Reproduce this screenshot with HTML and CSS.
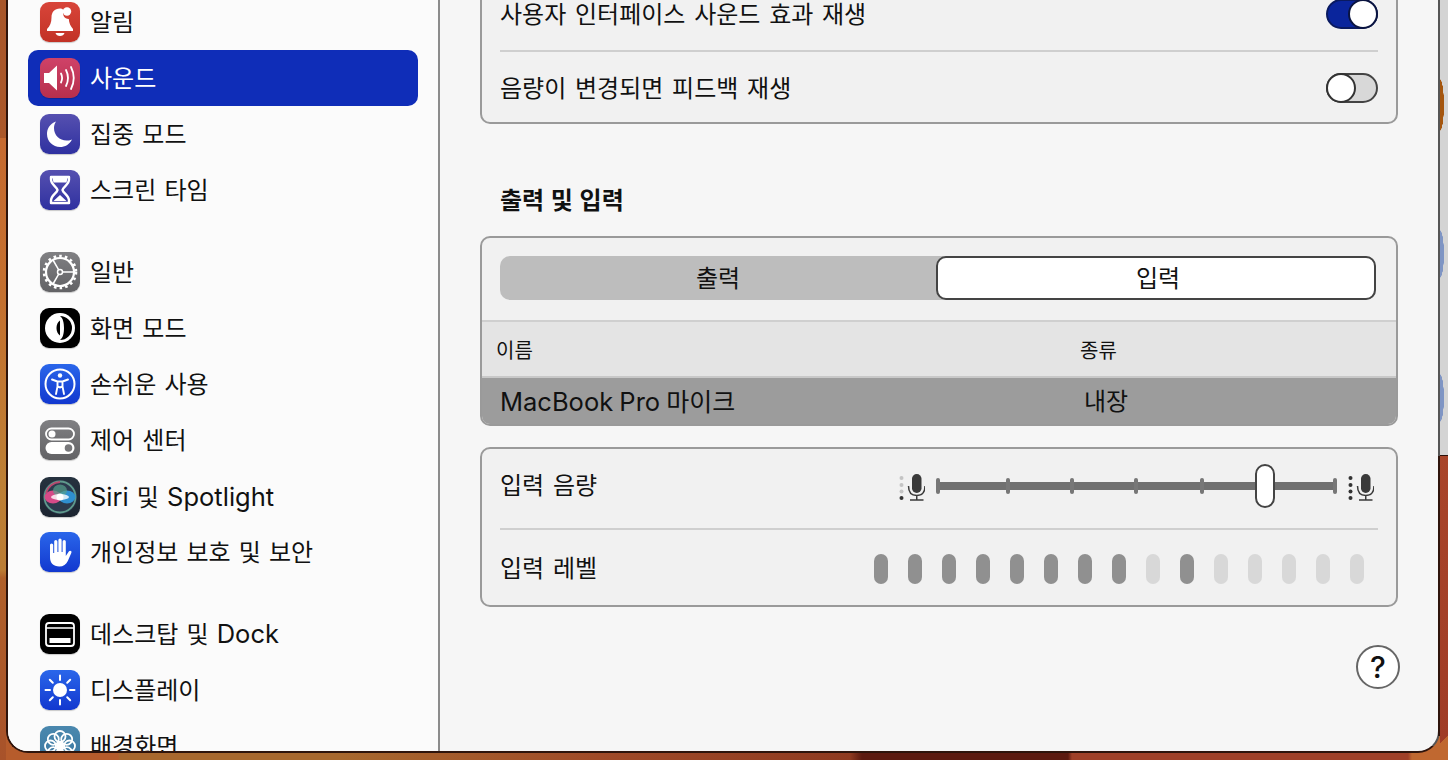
FILE: index.html
```html
<!DOCTYPE html>
<html lang="ko">
<head>
    <meta charset="UTF-8">
    <meta name="viewport" content="width=device-width, initial-scale=1.0">
    <title>사운드</title>
    <link rel="stylesheet" href="styles.css">
</head>
<body>

<div class="desktop">
    <div class="back-window"></div>

    <div class="window">
        <nav class="sidebar">
            <div class="side-group">
                <div class="side-item">
                    <span class="icon icon-red">
                        <svg viewBox="0 0 40 40"><path d="M20 6.500c-5.500 0-8.500 3.800-8.500 9 0 5-1.500 8.500-4.500 11.500v2h26v-2c-2.500-3-4-6-4.200-10-4.500 0-6.800-4-4.800-8.800-1.200-1.100-2.500-1.700-4-1.700z" fill="#fff"/><circle cx="27" cy="9.500" r="4.200" fill="#fff"/><path d="M15.500 31h9c-.5 2-2.300 3-4.500 3s-4-1-4.500-3z" fill="#fff"/></svg>
                    </span>
                    <span class="label">알림</span>
                </div>
                <div class="side-item selected">
                    <span class="icon icon-pink">
                        <svg viewBox="0 0 40 40"><path d="M4 15h5l8-7.500v25L9 25H4z" fill="#fff"/><path d="M21 15.500c1.500 3 1.500 6 0 9M26 12c2.500 5 2.500 11 0 16M31 9c3.500 7 3.500 15 0 22" fill="none" stroke="#fff" stroke-width="1.800" stroke-linecap="round"/></svg>
                    </span>
                    <span class="label">사운드</span>
                </div>
                <div class="side-item">
                    <span class="icon icon-indigo">
                        <svg viewBox="0 0 40 40"><path d="M16 7.500C9.500 10 7 15 7 20c0 7.500 6 13 13 13 5 0 9.500-2.500 12-7.500-2 1-4 1-5.500 1-7 0-12.500-5-12.500-12.500 0-2.500.8-4.800 2-6.500z" fill="#fff"/></svg>
                    </span>
                    <span class="label">집중 모드</span>
                </div>
                <div class="side-item">
                    <span class="icon icon-indigo">
                        <svg viewBox="0 0 40 40"><path d="M11 7h18v2.500c0 5-6 7.500-6.500 10.500.5 3 6.500 5.500 6.500 10.500V33H11v-2.500c0-5 6-7.500 6.500-10.500-.5-3-6.500-5.500-6.500-10.500z" fill="none" stroke="#fff" stroke-width="2.400" stroke-linejoin="round"/><path d="M12.500 8h15l-1 4.500h-13zM13.500 31l6.500-6 6.500 6z" fill="#fff"/></svg>
                    </span>
                    <span class="label">스크린 타임</span>
                </div>
            </div>

            <div class="side-group">
                <div class="side-item">
                    <span class="icon icon-gray">
                        <svg viewBox="0 0 40 40"><circle cx="20" cy="20" r="14" fill="none" stroke="#fff" stroke-width="2.200"/><circle cx="20" cy="20" r="16" fill="none" stroke="#fff" stroke-width="2.600" stroke-dasharray="2.600 3.100"/><circle cx="20" cy="20" r="2.500" fill="none" stroke="#fff" stroke-width="1.500"/><path d="M22.500 20H34M18.700 17.800 13 8M18.700 22.200 13 32" stroke="#fff" stroke-width="1.500"/></svg>
                    </span>
                    <span class="label">일반</span>
                </div>
                <div class="side-item">
                    <span class="icon icon-black">
                        <svg viewBox="0 0 40 40"><circle cx="20" cy="20" r="15" fill="#fff"/><path d="M20 8a12 12 0 0 1 0 24c3-2 4-7 4-12s-1-10-4-12z" fill="#000"/><path d="M20 12.500c-2.500 1.500-3.500 4.500-3.500 7.500s1 6 3.500 7.500z" fill="#000"/></svg>
                    </span>
                    <span class="label">화면 모드</span>
                </div>
                <div class="side-item">
                    <span class="icon icon-blue">
                        <svg viewBox="0 0 40 40"><circle cx="20" cy="20" r="14.500" fill="none" stroke="#fff" stroke-width="2"/><circle cx="20" cy="11.500" r="2.200" fill="#fff"/><path d="M12 15.500 17.500 17.500v5L16 30M28 15.500 22.500 17.500v5L24 30M17.500 17.500h5M17.500 22.500 20 23.500l2.500-1" fill="none" stroke="#fff" stroke-width="1.900" stroke-linecap="round"/></svg>
                    </span>
                    <span class="label">손쉬운 사용</span>
                </div>
                <div class="side-item">
                    <span class="icon icon-gray">
                        <svg viewBox="0 0 40 40"><rect x="6" y="8.500" width="28" height="11" rx="5.500" fill="none" stroke="#fff" stroke-width="1.800"/><circle cx="12" cy="14" r="3.500" fill="#fff"/><rect x="5.500" y="22" width="29" height="12" rx="6" fill="#fff"/><circle cx="28.500" cy="28" r="3.800" fill="#77777a"/></svg>
                    </span>
                    <span class="label">제어 센터</span>
                </div>
                <div class="side-item siri">
                    <span class="icon icon-siri">
                        <svg viewBox="0 0 40 40"><circle cx="20" cy="20" r="17" fill="#2c3a4e"/><circle cx="20" cy="20" r="15.500" fill="none" stroke="#5f9a8c" stroke-width="1.800"/><path d="M6 16a15 15 0 0 1 14-11" fill="none" stroke="#b8486e" stroke-width="1.800"/><ellipse cx="13" cy="20" rx="8.500" ry="6.500" fill="#d64a88"/><ellipse cx="27" cy="20" rx="8.500" ry="6.500" fill="#2f8fd0"/><ellipse cx="20" cy="13.500" rx="7" ry="6" fill="#56a08c" opacity=".7"/><ellipse cx="20" cy="20" rx="9" ry="3" fill="#fff" opacity=".8"/><circle cx="20" cy="20" r="3.500" fill="#fff"/></svg>
                    </span>
                    <span class="label"><span class="latin">Siri</span> 및 <span class="latin">Spotlight</span></span>
                </div>
                <div class="side-item">
                    <span class="icon icon-blue">
                        <svg viewBox="0 0 40 40"><path d="M10 13a1.600 1.600 0 0 1 3.200 0v8h1V9.500a1.600 1.600 0 0 1 3.200 0V20h1V8a1.600 1.600 0 0 1 3.200 0v12h1V9.500a1.600 1.600 0 0 1 3.200 0V24l3-4.500c1-1.500 3.500-.5 2.500 1.500l-3.500 8c-1.500 3.500-4.500 5.500-8.500 5.500-6 0-9.300-3.500-9.300-9.500z" fill="#fff"/></svg>
                    </span>
                    <span class="label">개인정보 보호 및 보안</span>
                </div>
            </div>

            <div class="side-group last">
                <div class="side-item">
                    <span class="icon icon-black">
                        <svg viewBox="0 0 40 40"><rect x="6" y="9" width="28" height="23" rx="3" fill="none" stroke="#fff" stroke-width="1.800"/><path d="M6 14h28" stroke="#fff" stroke-width="1.500"/><rect x="9.500" y="24" width="21" height="5" fill="#fff"/></svg>
                    </span>
                    <span class="label">데스크탑 및 <span class="latin">Dock</span></span>
                </div>
                <div class="side-item">
                    <span class="icon icon-blue">
                        <svg viewBox="0 0 40 40"><circle cx="20" cy="20" r="7" fill="#fff"/><path d="M20 5.500v4.500M20 30v4.500M5.500 20H10M30 20h4.500M9.800 9.800l3 3M27.200 27.200l3 3M30.200 9.800l-3 3M12.800 27.200l-3 3" stroke="#fff" stroke-width="2" stroke-linecap="round"/></svg>
                    </span>
                    <span class="label">디스플레이</span>
                </div>
                <div class="side-item">
                    <span class="icon icon-teal">
                        <svg viewBox="0 0 40 40" fill="none" stroke="#fff" stroke-width="1.800"><circle cx="20" cy="20" r="3" fill="#fff"/><circle cx="20" cy="10.500" r="5.500"/><circle cx="20" cy="29.500" r="5.500"/><circle cx="10.500" cy="20" r="5.500"/><circle cx="29.500" cy="20" r="5.500"/><circle cx="13.300" cy="13.300" r="5.500"/><circle cx="26.700" cy="13.300" r="5.500"/><circle cx="13.300" cy="26.700" r="5.500"/><circle cx="26.700" cy="26.700" r="5.500"/></svg>
                    </span>
                    <span class="label">배경화면</span>
                </div>
            </div>
        </nav>

        <main class="content">
            <section class="card">
                <div class="setting first">
                    <span class="label">사용자 인터페이스 사운드 효과 재생</span>
                    <span class="toggle on"></span>
                </div>
                <div class="setting second">
                    <span class="label">음량이 변경되면 피드백 재생</span>
                    <span class="toggle"></span>
                </div>
            </section>

            <h2 class="section-title">출력 및 입력</h2>

            <section class="card">
                <div class="segments">
                    <div class="segment">출력</div>
                    <div class="segment active">입력</div>
                </div>
                <div class="table-head">
                    <span>이름</span>
                    <span>종류</span>
                </div>
                <div class="table-row">
                    <span class="label"><span class="latin">MacBook Pro</span> 마이크</span>
                    <span class="label kind">내장</span>
                </div>
            </section>

            <section class="card input-card">
                <div class="setting volume">
                    <span class="label">입력 음량</span>
                    <div class="slider-wrap">
                        <svg class="mic" viewBox="0 0 26 28">
                            <circle cx="2.500" cy="5" r="2" fill="#c4c4c4"/>
                            <circle cx="2.500" cy="12" r="2" fill="#c4c4c4"/>
                            <circle cx="2.500" cy="18.500" r="2" fill="#c4c4c4"/>
                            <circle cx="2.500" cy="25" r="2" fill="#333"/>
                            <rect x="13" y="1" width="9.500" height="19" rx="4.700" fill="#3a3a3a"/>
                            <path d="M9.500 13c0 6 3 9.500 8.250 9.500S26 19 26 13M17.750 22.500V27M11 27h13.500" fill="none" stroke="#3a3a3a" stroke-width="1.500"/>
                        </svg>
                        <div class="slider">
                            <span class="tick" style="left: 0px"></span>
                            <span class="tick" style="left: 70px"></span>
                            <span class="tick" style="left: 134px"></span>
                            <span class="tick" style="left: 198px"></span>
                            <span class="tick" style="left: 264px"></span>
                            <span class="tick" style="left: 397px"></span>
                            <span class="thumb"></span>
                        </div>
                        <svg class="mic" viewBox="0 0 26 28">
                            <circle cx="2.500" cy="5" r="2" fill="#333"/>
                            <circle cx="2.500" cy="12" r="2" fill="#333"/>
                            <circle cx="2.500" cy="18.500" r="2" fill="#333"/>
                            <circle cx="2.500" cy="25" r="2" fill="#333"/>
                            <rect x="13" y="1" width="9.500" height="19" rx="4.700" fill="#3a3a3a"/>
                            <path d="M9.500 13c0 6 3 9.500 8.250 9.500S26 19 26 13M17.750 22.500V27M11 27h13.500" fill="none" stroke="#3a3a3a" stroke-width="1.500"/>
                        </svg>
                    </div>
                </div>
                <div class="setting level">
                    <span class="label">입력 레벨</span>
                    <div class="meter">
                        <span class="pill on"></span>
                        <span class="pill on"></span>
                        <span class="pill on"></span>
                        <span class="pill on"></span>
                        <span class="pill on"></span>
                        <span class="pill on"></span>
                        <span class="pill on"></span>
                        <span class="pill on"></span>
                        <span class="pill"></span>
                        <span class="pill on"></span>
                        <span class="pill"></span>
                        <span class="pill"></span>
                        <span class="pill"></span>
                        <span class="pill"></span>
                        <span class="pill"></span>
                    </div>
                </div>
            </section>

            <div class="help-row">
                <button class="help">?</button>
            </div>
        </main>
    </div>
</div>

</body>
</html>
```

FILE: styles.css
```css
*, *::after {
    box-sizing: border-box;
}
body {
    margin: 0;
    font-family: Inter, "Noto Sans CJK KR", sans-serif;
    color: #111;
    overflow: hidden;
}
.desktop {
    position: relative;
    width: 1448px;
    height: 760px;
    overflow: hidden;
    background:
        linear-gradient(180deg, #a8562a 0, #ab582a 138px, #c66a30 138px, #c4702f 300px, #bd7f35 480px, #bb7c34 570px, #b0602a 578px, #a8522a 760px) left top / 6px 760px no-repeat,
        linear-gradient(135deg, #a9452a 0, #a03c26 92%, #c06830 92%) right bottom / 8px 304px no-repeat,
        linear-gradient(90deg, #b65c2c 0, #b65c2c 118px, #a8682e 120px, #a8682e 340px, #a04a28 600px, #8f3a20 850px, #5c1a10 862px, #5c1a10 1068px, #a04028 1072px, #a04028 1408px, #c06830 1412px);
}
.desktop::after {
    /* window edge is darker once it leaves the window behind */
    content: "";
    position: absolute;
    left: 1438px;
    top: 456px;
    width: 2px;
    height: 280px;
    background-color: #2e140c;
}
.back-window {
    position: absolute;
    left: 1438px;
    top: 0;
    width: 10px;
    height: 456px;
    background:
        radial-gradient(ellipse 4px 26px at 2px 105px, #a5560f 0, #a5560f 95%, transparent 100%),
        radial-gradient(ellipse 4px 24px at 2px 254px, #7f95c4 0, #7f95c4 95%, transparent 100%),
        radial-gradient(ellipse 4px 24px at 2px 398px, #7f95c4 0, #7f95c4 95%, transparent 100%),
        #d4d4d4;
    border-bottom: 1px solid #2c120a;
}
.window {
    position: absolute;
    left: 6px;
    top: -28px;
    width: 1434px;
    height: 781px;
    display: flex;
    overflow: hidden;
    border: 2px solid #2e140c;
    border-right-color: #555;
    border-radius: 0 0 22px 22px;
    background: #f6f6f6;
}

/* sidebar */
.sidebar {
    width: 432px;
    flex-shrink: 0;
    padding: 20px 20px 0;
    background: #fbfbfb;
    border-right: 2px solid #8c8c8c;
    overflow: hidden;
}
.side-group {
    margin-bottom: 26px;
}
.side-item {
    display: flex;
    align-items: center;
    gap: 10px;
    height: 56px;
    padding-left: 12px;
    border-radius: 10px;
    font-size: 24px;
    word-spacing: 1.4px;
    white-space: nowrap;
}
.side-item.siri {
    padding-top: 2px;
}
.side-item.selected {
    background-color: #0f2db8;
    color: white;
}
.label {
    padding-bottom: 3px;
}
.latin {
    font-size: 25.5px;
}
.icon {
    width: 40px;
    height: 40px;
    flex-shrink: 0;
    border-radius: 9px;
    box-shadow: 0 1px 1px rgba(0,0,0,0.2);
}
.icon svg {
    display: block;
    width: 40px;
    height: 40px;
}
.icon-red { background: linear-gradient(#d8453a, #c23225); }
.icon-pink { background: linear-gradient(#cf4268, #b72f4c); }
.icon-indigo { background: linear-gradient(#5650b0, #2f31a0); }
.icon-gray { background: linear-gradient(#808083, #626265); }
.icon-black { background: #000; }
.icon-blue { background: linear-gradient(#2a66ea, #1238cf); }
.icon-siri { background: linear-gradient(#26323f, #1c2430); }
.icon-teal { background: linear-gradient(#4a88ae, #3a76a0); }

/* main pane */
.content {
    flex: 1;
    padding: 2px 40px 0;
    overflow: hidden;
}
.card {
    background-color: #f1f1f1;
    border: 2px solid #9a9a9a;
    border-radius: 10px;
    overflow: hidden;
}
.setting {
    display: flex;
    align-items: center;
    justify-content: space-between;
    margin: 0 18px;
    font-size: 24px;
    word-spacing: 2px;
}
.setting.first {
    height: 74px;
    border-bottom: 2px solid #cfcfcf;
}
.setting.second {
    height: 70px;
    padding-top: 2px;
}
.toggle {
    position: relative;
    width: 52px;
    height: 30px;
    border: 2px solid #444;
    border-radius: 15px;
    background-color: #d8d8d8;
}
.toggle::after {
    content: "";
    position: absolute;
    left: -2px;
    top: -2px;
    width: 30px;
    height: 30px;
    border: 2px solid #333;
    border-radius: 50%;
    background-color: white;
}
.toggle.on {
    background-color: #0a259c;
    border-color: #0a1a60;
}
.toggle.on::after {
    left: 20px;
    border-color: #0a1440;
}
.section-title {
    margin: 0;
    height: 112px;
    padding: 61px 0 0 20px;
    font-size: 24px;
    line-height: 32px;
    font-weight: 700;
    word-spacing: 1px;
}
.segments {
    display: flex;
    margin: 18px 20px 20px 18px;
    height: 44px;
    background-color: #bdbdbd;
    border-radius: 10px;
}
.segment {
    display: flex;
    align-items: center;
    justify-content: center;
    width: 436px;
    padding-bottom: 4px;
    font-size: 24px;
}
.segment.active {
    width: 440px;
    padding-left: 4px;
    background-color: white;
    border: 2px solid #444;
    border-radius: 10px;
}
.table-head,
.table-row {
    display: grid;
    grid-template-columns: 584px 1fr;
    align-items: center;
}
.table-head {
    height: 58px;
    padding-left: 14px;
    background-color: #e4e4e4;
    border-top: 2px solid #cfcfcf;
    border-bottom: 2px solid #c8c8c8;
    font-size: 20px;
}
.table-row {
    height: 46px;
    padding-left: 18px;
    background-color: #9c9c9c;
    font-size: 25px;
    word-spacing: -1px;
}
.kind {
    font-size: 24px;
}
.input-card {
    margin-top: 21px;
}
.setting.volume {
    height: 81px;
    padding-bottom: 6px;
    border-bottom: 2px solid #cfcfcf;
}
.volume .label {
    padding-bottom: 5px;
}
.setting.level {
    height: 75px;
}
.slider-wrap {
    display: flex;
    align-items: center;
    gap: 11px;
    margin-right: 4px;
}
.mic {
    display: block;
    width: 26px;
    height: 28px;
    margin-top: 2px;
}
.slider {
    position: relative;
    width: 401px;
    height: 8px;
    background-color: #707070;
}
.tick {
    position: absolute;
    top: -4px;
    width: 4px;
    height: 16px;
    border-radius: 2px;
    background-color: #777;
}
.thumb {
    position: absolute;
    left: 319px;
    top: -18px;
    width: 20px;
    height: 44px;
    border: 2px solid #444;
    border-radius: 10px;
    background-color: white;
}
.meter {
    display: flex;
    gap: 20px;
    margin: 2px 14px 0 0;
}
.pill {
    width: 14px;
    height: 30px;
    border-radius: 7px;
    background-color: #d8d8d8;
}
.pill.on {
    background-color: #909090;
}
.help-row {
    display: flex;
    justify-content: flex-end;
    margin: 38px -2px 0 0;
}
.help {
    width: 44px;
    height: 44px;
    padding: 0;
    border: 2px solid #666;
    border-radius: 50%;
    background-color: white;
    color: #111;
    font-family: Inter, sans-serif;
    font-size: 30px;
    font-weight: 500;
    line-height: 38px;
}
```
